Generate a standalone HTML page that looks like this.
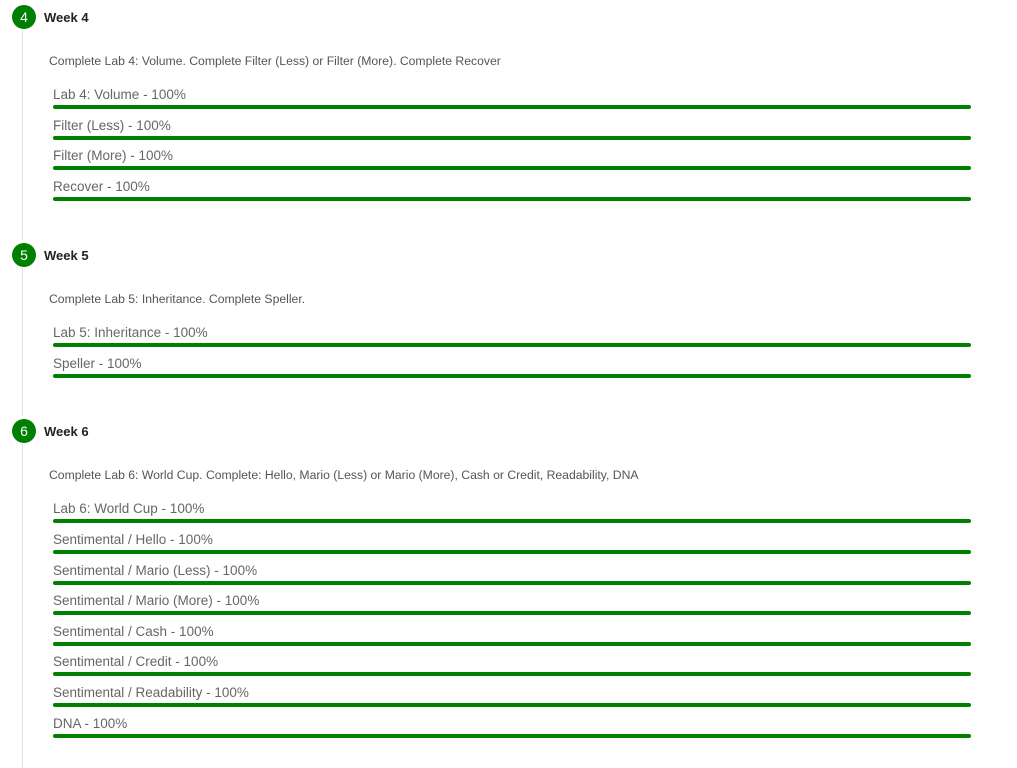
<!DOCTYPE html>
<html><head><meta charset="utf-8"><style>
body{margin:0;width:1017px;height:768px;background:#fff;position:relative;overflow:hidden;font-family:"Liberation Sans",sans-serif}
.vl{position:absolute;left:22px;width:1px;background:#e0e0e0}
.c{position:absolute;left:12px;width:24px;height:24px;border-radius:50%;background:#008000;color:#fff;font-size:14px;line-height:24px;text-align:center}
.h{position:absolute;left:44px;font-size:13px;font-weight:bold;color:#222;line-height:16px;margin-top:1px}
.d{position:absolute;left:49px;font-size:12.2px;color:#555;line-height:14px;white-space:nowrap;margin-top:1px}
.l{position:absolute;left:53px;font-size:13.5px;color:#666;line-height:16px;white-space:nowrap;margin-top:1px}
.b{position:absolute;left:53px;width:918px;height:4px;border-radius:2px;background:#008000}
</style></head><body>
<div class="vl" style="top:30px;height:210px"></div>
<div class="vl" style="top:268px;height:148px"></div>
<div class="vl" style="top:444px;height:324px"></div>

<div class="c" style="top:5px">4</div><div class="h" style="top:9px">Week 4</div>
<div class="d" style="top:53px">Complete Lab 4: Volume. Complete Filter (Less) or Filter (More). Complete Recover</div>
<div class="l" style="top:86px">Lab 4: Volume - 100%</div><div class="b" style="top:105px"></div>
<div class="l" style="top:117px">Filter (Less) - 100%</div><div class="b" style="top:136px"></div>
<div class="l" style="top:147px">Filter (More) - 100%</div><div class="b" style="top:166px"></div>
<div class="l" style="top:178px">Recover - 100%</div><div class="b" style="top:197px"></div>

<div class="c" style="top:243px">5</div><div class="h" style="top:247px">Week 5</div>
<div class="d" style="top:291px">Complete Lab 5: Inheritance. Complete Speller.</div>
<div class="l" style="top:324px">Lab 5: Inheritance - 100%</div><div class="b" style="top:343px"></div>
<div class="l" style="top:355px">Speller - 100%</div><div class="b" style="top:374px"></div>

<div class="c" style="top:419px">6</div><div class="h" style="top:423px">Week 6</div>
<div class="d" style="top:467px">Complete Lab 6: World Cup. Complete: Hello, Mario (Less) or Mario (More), Cash or Credit, Readability, DNA</div>
<div class="l" style="top:500px">Lab 6: World Cup - 100%</div><div class="b" style="top:519px"></div>
<div class="l" style="top:531px">Sentimental / Hello - 100%</div><div class="b" style="top:550px"></div>
<div class="l" style="top:562px">Sentimental / Mario (Less) - 100%</div><div class="b" style="top:581px"></div>
<div class="l" style="top:592px">Sentimental / Mario (More) - 100%</div><div class="b" style="top:611px"></div>
<div class="l" style="top:623px">Sentimental / Cash - 100%</div><div class="b" style="top:642px"></div>
<div class="l" style="top:653px">Sentimental / Credit - 100%</div><div class="b" style="top:672px"></div>
<div class="l" style="top:684px">Sentimental / Readability - 100%</div><div class="b" style="top:703px"></div>
<div class="l" style="top:715px">DNA - 100%</div><div class="b" style="top:734px"></div>
</body></html>
